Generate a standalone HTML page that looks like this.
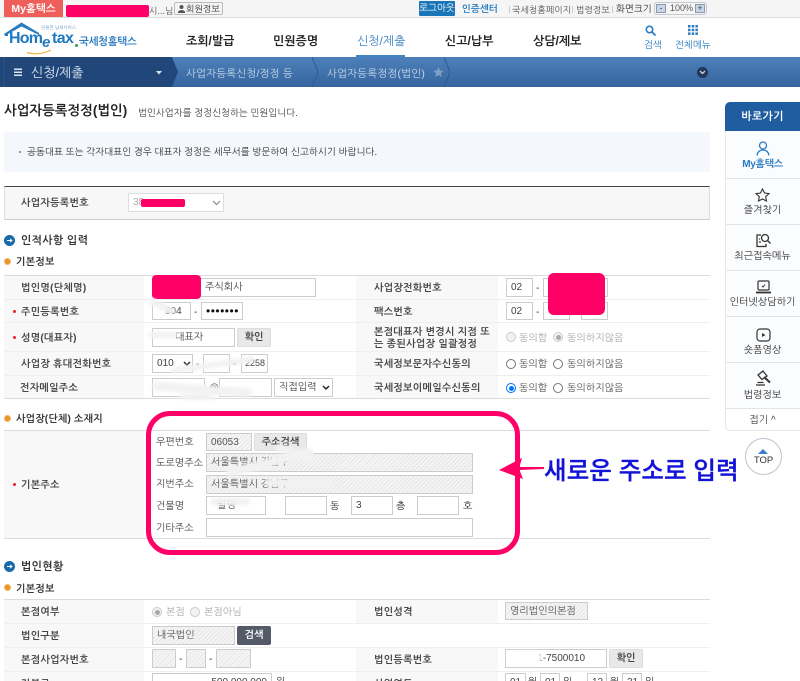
<!DOCTYPE html>
<html lang="ko"><head><meta charset="utf-8"><title>사업자등록정정(법인)</title>
<style>
html,body{margin:0;padding:0;background:#fff}
#p{position:relative;width:800px;height:681px;overflow:hidden;background:#fff;font-family:"Liberation Sans","NanumGothic","Noto Sans CJK KR",sans-serif;font-size:10px;color:#333}
#p div,#p span.a{position:absolute;box-sizing:border-box}
.t{position:absolute;white-space:nowrap;line-height:12px;font-size:10px;margin-top:2px}
.b{font-weight:bold}
.l{position:absolute;white-space:nowrap;line-height:12px;font-size:10px;font-weight:bold;color:#444;letter-spacing:.3px;margin-top:2px}
.i{background:#fff;border:1px solid #ccc;line-height:17px;padding-left:4px;font-size:10px;white-space:nowrap;overflow:hidden;color:#444}
.h{background:repeating-linear-gradient(135deg,#f5f5f5 0 2px,#e6e6e6 2px 3px);border:1px solid #ccc;line-height:17px;padding-left:4px;font-size:10px;white-space:nowrap;overflow:hidden;color:#555}
.btn{background:#e8e8e8;border:1px solid #ddd;border-radius:2px;text-align:center;line-height:17px;font-weight:bold;font-size:10px;color:#444}
.r{width:10px;height:10px;border-radius:50%;border:1px solid #767676;background:#fff}
.rd{border-color:#ccc;background:#f2f2f2}
.line{background:#e4e4e4;height:1px}
.sm{background:#f2f2f2;border-radius:8px;filter:blur(1.5px)}
.rc{width:7px;height:7px;border-radius:50%;background:#e8962a;border:1.5px solid #f4b45c}
.sl{position:absolute;left:725px;width:75px;text-align:center;font-size:10px;line-height:12px;color:#333;white-space:nowrap}
.nav{position:absolute;top:34px;font-size:12px;font-weight:bold;color:#222;line-height:14px;white-space:nowrap}
</style></head><body><div id="p">

<!-- top bar -->
<div style="left:0;top:0;width:800px;height:18px;background:#f5f5f5;border-bottom:1px solid #dedede"></div>
<div style="left:4px;top:0;width:59px;height:17px;background:#ee5f5b;color:#fff;font-weight:bold;font-size:10.5px;line-height:18px;text-align:center">My홈택스</div>
<div style="left:66px;top:5px;width:83px;height:12px;background:#ff0066;border-radius:2px"></div>
<span class="t" style="left:149px;top:3px;color:#555;font-size:9px">시...님</span>
<div style="left:174px;top:2px;width:49px;height:13px;background:#f4f4f4;border:1px solid #bbb;border-radius:2px;font-size:9px;line-height:12px;padding-left:11px;color:#333;white-space:nowrap">회원정보
<svg style="position:absolute;left:3px;top:2px" width="7" height="8" viewBox="0 0 7 8"><circle cx="3.5" cy="2" r="2" fill="#555"/><path d="M0 8V6.500Q3.500 3.500 7 6.500V8Z" fill="#555"/></svg></div>

<div style="left:419px;top:1px;width:36px;height:15px;background:#1a76b8;color:#fff;font-size:9.500px;line-height:16px;text-align:center;border-radius:1px">로그아웃</div>
<span class="t b" style="left:462px;top:2px;color:#2b7fc0;font-size:9.500px">인증센터</span>
<span class="t" style="left:512px;top:2px;font-size:9px;color:#555">국세청홈페이지</span>
<span class="t" style="left:576px;top:2px;font-size:9px;color:#555">법령정보</span>
<span class="t" style="left:616px;top:2px;font-size:9.500px;color:#333">화면크기</span>
<div style="left:509px;top:6px;width:1px;height:7px;background:#ccc"></div>
<div style="left:572px;top:6px;width:1px;height:7px;background:#ccc"></div>
<div style="left:612px;top:6px;width:1px;height:7px;background:#ccc"></div>
<div style="left:654px;top:2px;width:53px;height:13px;background:#f5f5f5;border:1px solid #c4c8d0;border-radius:3px"></div>
<div style="left:656px;top:4px;width:10px;height:9px;background:#c8d6e8;border:1px solid #8a9ab0;text-align:center;font-size:9px;line-height:6px;color:#345">-</div>
<span class="t" style="left:670px;top:0;font-size:9px;color:#555">100%</span>
<div style="left:695px;top:4px;width:10px;height:9px;background:#c8d6e8;border:1px solid #8a9ab0;text-align:center;font-size:9px;line-height:7px;color:#345">+</div>

<!-- logo -->
<svg style="position:absolute;left:3px;top:21px" width="80" height="34" viewBox="0 0 80 34">
<path d="M1 13L18.500 1.500 36 12V14L18.500 5.500 5 13V15H2Z" fill="#2a7cc0"/>
<path d="M24 31.500Q36 35 48 29" stroke="#f0b040" stroke-width="1.200" fill="none"/>
</svg>
<span class="t b" style="left:9px;top:28px;font-size:16px;line-height:18px;color:#1f79c0;letter-spacing:-.8px">Hom</span>
<span class="t b" style="left:42px;top:33px;font-size:15px;line-height:16px;color:#1f79c0;font-style:italic">e</span>
<span class="t b" style="left:52px;top:28px;font-size:16px;line-height:18px;color:#1f79c0;letter-spacing:-.6px">tax</span>
<div style="left:75px;top:44px;width:3px;height:3px;background:#30a050;border-radius:50%"></div>
<span class="t" style="left:41px;top:23px;font-size:4.500px;line-height:6px;color:#5a90c0">민원은 납세서비스</span>
<span class="t b" style="left:79px;top:34px;font-size:10.500px;color:#2a7cc0;letter-spacing:-.3px">국세청홈택스</span>

<!-- nav -->
<span class="nav" style="left:186px">조회/발급</span>
<span class="nav" style="left:273px">민원증명</span>
<span class="nav" style="left:357px;color:#3f86c4;font-weight:normal">신청/제출</span>
<span class="nav" style="left:445px">신고/납부</span>
<span class="nav" style="left:533px">상담/제보</span>
<svg style="position:absolute;left:645px;top:25px" width="11" height="11" viewBox="0 0 11 11"><circle cx="4.500" cy="4.500" r="3.200" fill="none" stroke="#2a7cc0" stroke-width="1.600"/><path d="M7 7L10.500 10.500" stroke="#2a7cc0" stroke-width="1.800"/></svg>
<span class="t" style="left:644px;top:38px;font-size:9.500px;color:#2a7cc0">검색</span>
<svg style="position:absolute;left:688px;top:25px" width="10" height="10" viewBox="0 0 10 10" fill="#2a7cc0"><rect width="2.500" height="2.500"/><rect x="3.700" width="2.500" height="2.500"/><rect x="7.400" width="2.500" height="2.500"/><rect y="3.700" width="2.500" height="2.500"/><rect x="3.700" y="3.700" width="2.500" height="2.500"/><rect x="7.400" y="3.700" width="2.500" height="2.500"/><rect y="7.400" width="2.500" height="2.500"/><rect x="3.700" y="7.400" width="2.500" height="2.500"/><rect x="7.400" y="7.400" width="2.500" height="2.500"/></svg>
<span class="t" style="left:675px;top:38px;font-size:9.500px;color:#2a7cc0">전체메뉴</span>

<!-- breadcrumb -->
<div style="left:0;top:57px;width:800px;height:30px;background:linear-gradient(#4d80ba,#36659f)"></div>
<div style="left:356px;top:55px;width:49px;height:2px;background:#3f86c4"></div>
<svg style="position:absolute;left:0;top:57px" width="450" height="30" viewBox="0 0 450 30"><path d="M0 0H172L178 15 172 30H0Z" fill="#21477a"/><path d="M312 0L318 15 312 30M444 0L450 15 444 30" fill="none" stroke="#2f5a92"/><path d="M4 0V30" stroke="#2c5488"/></svg>
<svg style="position:absolute;left:14px;top:68px" width="9" height="9" viewBox="0 0 9 9" fill="#dfe6f0"><rect width="8" height="1.500" y="0.500"/><rect width="8" height="1.500" y="3.500"/><rect width="8" height="1.500" y="6.500"/></svg>
<span class="t" style="left:31px;top:64px;font-size:13px;line-height:14px;color:#dfe8f3">신청/제출</span>
<svg style="position:absolute;left:156px;top:71px" width="6" height="4" viewBox="0 0 6 4"><path d="M0 0H6L3 3.500Z" fill="#dfe6f0"/></svg>
<span class="t" style="left:186px;top:66px;font-size:10.500px;color:#c8d6e8;letter-spacing:.2px">사업자등록신청/정정 등</span>
<span class="t" style="left:327px;top:66px;font-size:10.500px;color:#c8d6e8;letter-spacing:.2px">사업자등록정정(법인)</span>
<svg style="position:absolute;left:433px;top:67px" width="11" height="10" viewBox="0 0 11 10"><path d="M5.500 0L7 3.500 10.800 3.800 7.900 6.200 8.800 10 5.500 8 2.200 10 3.100 6.200 .2 3.800 4 3.500Z" fill="#7e9fc6"/></svg>
<div style="left:697px;top:67px;width:11px;height:11px;border-radius:50%;background:#22375a"></div>
<svg style="position:absolute;left:699px;top:70px" width="7" height="5" viewBox="0 0 7 5"><path d="M1 1L3.500 3.500 6 1" fill="none" stroke="#cdd6e2" stroke-width="1.300"/></svg>

<!-- title -->
<span class="t" style="left:4px;top:100px;font-size:13.500px;line-height:18px;font-weight:bold;color:#222">사업자등록정정(법인)</span>
<span class="t" style="left:138px;top:106px;font-size:9.500px;color:#444">법인사업자를 정정신청하는 민원입니다.</span>

<div style="left:4px;top:132px;width:706px;height:40px;background:#f4f7fb"></div>
<div style="left:19px;top:151px;width:2px;height:2px;background:#999"></div>
<span class="t" style="left:27px;top:145px;font-size:9.500px;color:#333;letter-spacing:.05px">공동대표 또는 각자대표인 경우 대표자 정정은 세무서를 방문하여 신고하시기 바랍니다.</span>

<div style="left:4px;top:186px;width:706px;height:34px;background:#f7f7f7;border-top:1px solid #444;border-bottom:1px solid #ccc;border-left:1px solid #ddd;border-right:1px solid #ddd"></div>
<span class="l" style="left:21px;top:196px">사업자등록번호</span>
<div class="i" style="left:128px;top:193px;width:96px;height:19px;color:#aaa;border-color:#ddd">38</div>
<div style="left:141px;top:199px;width:44px;height:8px;background:#ff0066;border-radius:2px"></div>
<svg style="position:absolute;left:212px;top:200px" width="9" height="6" viewBox="0 0 9 6"><path d="M1 1L4.500 4.500 8 1" fill="none" stroke="#888" stroke-width="1.200"/></svg>

<svg style="position:absolute;left:4px;top:235px" width="11" height="11" viewBox="0 0 11 11"><circle cx="5.500" cy="5.500" r="5.500" fill="#1a6aa8"/><path d="M3 5.500H8M6 3.800L8 5.500 6 7.200" fill="none" stroke="#fff" stroke-width=".9"/></svg>
<span class="t b" style="left:21px;top:233px;font-size:11px;color:#333;letter-spacing:.3px">인적사항 입력</span>
<div class="rc" style="left:4px;top:258px"></div>
<span class="t b" style="left:16px;top:255px;color:#333;letter-spacing:.3px">기본정보</span>

<!-- table 1 -->
<div style="left:4px;top:275px;width:140px;height:124px;background:#f8f8f8"></div>
<div style="left:356px;top:275px;width:142px;height:124px;background:#f8f8f8"></div>
<div style="left:4px;top:275px;width:706px;height:1px;background:#dcdcdc"></div>
<div class="line" style="left:4px;top:299px;width:706px;background:#efefef"></div>
<div class="line" style="left:4px;top:322px;width:706px;background:#efefef"></div>
<div class="line" style="left:4px;top:351px;width:706px;background:#efefef"></div>
<div class="line" style="left:4px;top:375px;width:706px;background:#efefef"></div>
<div class="line" style="left:4px;top:398px;width:706px;background:#dcdcdc"></div>

<span class="l" style="left:21px;top:281px">법인명(단체명)</span>
<span class="l" style="left:21px;top:305px">주민등록번호</span><div style="left:13px;top:310px;width:3px;height:3px;background:#e22;border-radius:50%"></div>
<span class="l" style="left:21px;top:331px">성명(대표자)</span><div style="left:13px;top:336px;width:3px;height:3px;background:#e22;border-radius:50%"></div>
<span class="l" style="left:21px;top:357px">사업장 휴대전화번호</span>
<span class="l" style="left:20px;top:381px">전자메일주소</span>

<div class="i" style="left:152px;top:278px;width:164px;height:19px;padding-left:52px">주식회사</div>
<div style="left:152px;top:275px;width:49px;height:24px;background:#ff0066;border-radius:4px"></div>
<div class="i" style="left:152px;top:302px;width:39px;height:18px;padding-left:12px">904</div>
<span class="t" style="left:194px;top:305px">-</span>
<div class="i" style="left:201px;top:302px;width:42px;height:18px;color:#111;font-size:12px;letter-spacing:.5px">•••••••</div>
<div class="i" style="left:152px;top:328px;width:83px;height:19px;padding-left:22px">대표자</div>
<div class="btn" style="left:237px;top:328px;width:34px;height:19px">확인</div>
<div class="i" style="left:152px;top:354px;width:41px;height:19px">010</div>
<svg style="position:absolute;left:183px;top:361px" width="8" height="6" viewBox="0 0 8 6"><path d="M1 1L4 4 7 1" fill="none" stroke="#222" stroke-width="1.500"/></svg>
<span class="t" style="left:196px;top:357px">-</span>
<div class="i" style="left:203px;top:354px;width:27px;height:19px"></div>
<span class="t" style="left:233px;top:357px">-</span>
<div class="i" style="left:241px;top:354px;width:27px;height:19px;font-size:9px;padding-left:3px">2258</div>
<div class="i" style="left:152px;top:378px;width:53px;height:19px"></div>
<span class="t" style="left:209px;top:381px">@</span>
<div class="i" style="left:219px;top:378px;width:53px;height:19px"></div>
<div class="i" style="left:274px;top:378px;width:59px;height:19px">직접입력</div>
<svg style="position:absolute;left:322px;top:385px" width="8" height="6" viewBox="0 0 8 6"><path d="M1 1L4 4 7 1" fill="none" stroke="#222" stroke-width="1.500"/></svg>
<!-- smudges -->
<div class="sm" style="left:148px;top:303px;width:28px;height:7px;transform:rotate(25deg)"></div>
<div class="sm" style="left:148px;top:332px;width:30px;height:6px"></div>
<div class="sm" style="left:170px;top:362px;width:85px;height:6px;transform:rotate(-8deg)"></div>
<div class="sm" style="left:152px;top:385px;width:100px;height:9px;transform:rotate(4deg)"></div>
<div class="sm" style="left:180px;top:393px;width:35px;height:7px"></div>

<span class="l" style="left:374px;top:281px">사업장전화번호</span>
<span class="l" style="left:374px;top:305px">팩스번호</span>
<span class="l" style="left:374px;top:325px">본점대표자 변경시 지점 또</span>
<span class="l" style="left:374px;top:337px">는 종된사업장 일괄정정</span>
<span class="l" style="left:374px;top:357px">국세정보문자수신동의</span>
<span class="l" style="left:374px;top:381px">국세정보이메일수신동의</span>

<div class="i" style="left:506px;top:278px;width:27px;height:19px">02</div><span class="t" style="left:536px;top:281px">-</span>
<div class="i" style="left:543px;top:278px;width:27px;height:19px"></div><div class="i" style="left:581px;top:278px;width:27px;height:19px"></div>
<div class="i" style="left:506px;top:302px;width:27px;height:18px">02</div><span class="t" style="left:536px;top:305px">-</span>
<div class="i" style="left:543px;top:302px;width:27px;height:18px"></div><div class="i" style="left:581px;top:302px;width:27px;height:18px"></div>
<div style="left:548px;top:273px;width:57px;height:42px;background:#ff0066;border-radius:6px"></div>

<div class="r rd" style="left:506px;top:332px"></div><span class="t" style="left:519px;top:331px;color:#aaa">동의함</span>
<div class="r rd" style="left:553px;top:332px"></div><div style="left:555.500px;top:334.500px;width:5px;height:5px;border-radius:50%;background:#aaa"></div><span class="t" style="left:567px;top:331px;color:#aaa">동의하지않음</span>
<div class="r" style="left:506px;top:359px"></div><span class="t" style="left:519px;top:357px;color:#555">동의함</span>
<div class="r" style="left:553px;top:359px"></div><span class="t" style="left:567px;top:357px;color:#555">동의하지않음</span>
<div class="r" style="left:506px;top:383px;border-color:#0075ff"></div><div style="left:508.500px;top:385.500px;width:5px;height:5px;border-radius:50%;background:#0075ff"></div><span class="t" style="left:519px;top:381px;color:#555">동의함</span>
<div class="r" style="left:553px;top:383px"></div><span class="t" style="left:567px;top:381px;color:#555">동의하지않음</span>

<!-- address -->
<div class="rc" style="left:4px;top:415px"></div>
<span class="t b" style="left:16px;top:412px;color:#333;letter-spacing:.2px">사업장(단체) 소재지</span>
<div style="left:4px;top:430px;width:140px;height:108px;background:#f8f8f8"></div>
<div style="left:4px;top:430px;width:706px;height:1px;background:#dcdcdc"></div>
<div style="left:4px;top:538px;width:706px;height:1px;background:#dcdcdc"></div>
<span class="l" style="left:21px;top:478px">기본주소</span><div style="left:13px;top:483px;width:3px;height:3px;background:#e22;border-radius:50%"></div>

<span class="t" style="left:156px;top:435px;color:#444">우편번호</span>
<span class="t" style="left:156px;top:456px;color:#444">도로명주소</span>
<span class="t" style="left:156px;top:477px;color:#444">지번주소</span>
<span class="t" style="left:156px;top:499px;color:#444">건물명</span>
<span class="t" style="left:156px;top:521px;color:#444">기타주소</span>
<div class="h" style="left:206px;top:433px;width:46px;height:18px">06053</div>
<div class="btn" style="left:254px;top:433px;width:53px;height:18px">주소검색</div>
<div class="h" style="left:206px;top:453px;width:267px;height:19px">서울특별시 강남구</div>
<div class="h" style="left:206px;top:475px;width:267px;height:19px">서울특별시 강남구</div>
<div class="i" style="left:206px;top:496px;width:60px;height:19px;padding-left:10px">빌딩</div>
<div class="i" style="left:285px;top:496px;width:42px;height:19px"></div><span class="t" style="left:330px;top:499px">동</span>
<div class="i" style="left:351px;top:496px;width:42px;height:19px">3</div><span class="t" style="left:396px;top:499px">층</span>
<div class="i" style="left:417px;top:496px;width:42px;height:19px"></div><span class="t" style="left:463px;top:499px">호</span>
<div class="i" style="left:206px;top:518px;width:267px;height:19px"></div>
<div class="sm" style="left:225px;top:458px;width:90px;height:9px;transform:rotate(-14deg)"></div>
<div class="sm" style="left:275px;top:449px;width:40px;height:8px;transform:rotate(20deg)"></div>
<div class="sm" style="left:265px;top:479px;width:70px;height:8px"></div>
<div class="sm" style="left:210px;top:498px;width:40px;height:7px"></div>

<!-- annotation -->
<div style="left:146px;top:411px;width:374px;height:144px;border:5px solid #ff0066;border-radius:24px"></div>
<svg style="position:absolute;left:495px;top:455px" width="52" height="30" viewBox="0 0 52 30"><path d="M4 15L27 3 24.500 12 49 12V14L24.500 15 28 24Z" fill="#ff0066"/></svg>
<span class="t" style="left:544px;top:455px;font-size:24.600px;line-height:30px;color:#1212d8;font-family:'Liberation Sans','Noto Sans CJK KR',sans-serif;font-weight:500;-webkit-text-stroke:.3px #1212d8">새로운 주소로 입력</span>

<!-- corporate -->
<svg style="position:absolute;left:4px;top:561px" width="11" height="11" viewBox="0 0 11 11"><circle cx="5.500" cy="5.500" r="5.500" fill="#1a6aa8"/><path d="M3 5.500H8M6 3.800L8 5.500 6 7.200" fill="none" stroke="#fff" stroke-width=".9"/></svg>
<span class="t b" style="left:21px;top:559px;font-size:11px;color:#333;letter-spacing:.3px">법인현황</span>
<div class="rc" style="left:4px;top:584px"></div>
<span class="t b" style="left:16px;top:582px;color:#333;letter-spacing:.3px">기본정보</span>
<div style="left:4px;top:599px;width:140px;height:82px;background:#f8f8f8"></div>
<div style="left:356px;top:599px;width:142px;height:24px;background:#f8f8f8"></div>
<div style="left:356px;top:647px;width:142px;height:34px;background:#f8f8f8"></div>
<div style="left:4px;top:599px;width:706px;height:1px;background:#dcdcdc"></div>
<div class="line" style="left:4px;top:623px;width:706px;background:#efefef"></div>
<div class="line" style="left:4px;top:647px;width:706px;background:#efefef"></div>
<div class="line" style="left:4px;top:671px;width:706px;background:#efefef"></div>
<span class="l" style="left:21px;top:605px">본점여부</span>
<span class="l" style="left:21px;top:629px">법인구분</span>
<span class="l" style="left:21px;top:653px">본점사업자번호</span>
<span class="l" style="left:21px;top:677px">자본금</span>
<span class="l" style="left:374px;top:605px">법인성격</span>
<span class="l" style="left:374px;top:653px">법인등록번호</span>
<span class="l" style="left:374px;top:677px">사업연도</span>

<div class="r rd" style="left:152px;top:607px"></div><div style="left:154.500px;top:609.500px;width:5px;height:5px;border-radius:50%;background:#aaa"></div>
<span class="t" style="left:166px;top:605px;color:#aaa">본점</span>
<div class="r rd" style="left:190px;top:607px"></div><span class="t" style="left:204px;top:605px;color:#aaa">본점아님</span>
<div class="h" style="left:505px;top:602px;width:83px;height:18px">영리법인의본점</div>
<div class="h" style="left:152px;top:626px;width:83px;height:19px">내국법인</div>
<div class="btn" style="left:237px;top:626px;width:34px;height:19px;background:#555a68;color:#fff;border-color:#555a68">검색</div>
<div class="h" style="left:152px;top:649px;width:24px;height:19px"></div><span class="t" style="left:179px;top:652px">-</span>
<div class="h" style="left:186px;top:649px;width:20px;height:19px"></div><span class="t" style="left:209px;top:652px">-</span>
<div class="h" style="left:216px;top:649px;width:35px;height:19px"></div>
<div class="i" style="left:505px;top:649px;width:102px;height:19px;padding-left:16px">0111-7500010</div>
<div class="sm" style="left:507px;top:651px;width:35px;height:14px;background:#fff"></div>
<div class="btn" style="left:609px;top:649px;width:34px;height:19px">확인</div>
<div class="i" style="left:152px;top:673px;width:120px;height:19px;text-align:right;padding-right:4px">500,000,000</div><span class="t" style="left:276px;top:675px">원</span>
<div class="i" style="left:505px;top:673px;width:21px;height:19px">01</div><span class="t" style="left:528px;top:675px">월</span>
<div class="i" style="left:540px;top:673px;width:20px;height:19px">01</div><span class="t" style="left:563px;top:675px">일</span><span class="t" style="left:578px;top:675px">~</span>
<div class="i" style="left:587px;top:673px;width:20px;height:19px">12</div><span class="t" style="left:610px;top:675px">월</span>
<div class="i" style="left:622px;top:673px;width:20px;height:19px">31</div><span class="t" style="left:645px;top:675px">일</span>

<!-- side panel -->
<div style="left:725px;top:102px;width:75px;height:329px;background:#fff;border:1px solid #e6e6e6;border-right:0;border-radius:5px 0 0 5px"></div>
<div style="left:725px;top:102px;width:75px;height:29px;background:#1f5ca0;border-radius:5px 0 0 0;color:#fff;font-size:11px;font-weight:bold;text-align:center;line-height:31px;letter-spacing:.3px">바로가기</div>
<div style="left:726px;top:131px;width:74px;height:277px;background:#fbfcfe"></div>
<div class="line" style="left:726px;top:178px;width:74px"></div>
<div class="line" style="left:726px;top:224px;width:74px"></div>
<div class="line" style="left:726px;top:270px;width:74px"></div>
<div class="line" style="left:726px;top:316px;width:74px"></div>
<div class="line" style="left:726px;top:362px;width:74px"></div>
<div class="line" style="left:726px;top:408px;width:74px"></div>

<svg style="position:absolute;left:756px;top:141px" width="14" height="15" viewBox="0 0 14 15" fill="none" stroke="#2a7cc0" stroke-width="1.300"><circle cx="7" cy="4.500" r="3.500"/><path d="M1 14.500Q2 9 7 9T13 14.500"/></svg>
<span class="sl" style="top:159px;color:#2a7cc0;font-weight:bold;font-size:10px;letter-spacing:-.3px">My홈택스</span>
<svg style="position:absolute;left:755px;top:188px" width="15" height="14" viewBox="0 0 15 14"><path d="M7.500 1L9.500 5 14 5.600 10.700 8.700 11.500 13 7.500 11 3.500 13 4.300 8.700 1 5.600 5.500 5Z" fill="none" stroke="#333" stroke-width="1.100"/></svg>
<span class="sl" style="top:205px">즐겨찾기</span>
<svg style="position:absolute;left:755px;top:233px" width="16" height="15" viewBox="0 0 16 15" fill="none" stroke="#333" stroke-width="1.300"><path d="M6 2H2V13.500H11V11"/><circle cx="10" cy="5" r="3.500"/><path d="M12.500 7.500L15.500 10.500M4 9H6M4 6H5"/></svg>
<span class="sl" style="top:251px">최근접속메뉴</span>
<svg style="position:absolute;left:756px;top:280px" width="15" height="14" viewBox="0 0 15 14" fill="none" stroke="#333" stroke-width="1.200"><rect x="2" y="1" width="11" height="9" rx="1"/><path d="M0 12.500H15" stroke-width="1.800"/><path d="M6 6L7 7 9 4.500" stroke-width="1"/></svg>
<span class="sl" style="top:297px">인터넷상담하기</span>
<svg style="position:absolute;left:756px;top:328px" width="15" height="14" viewBox="0 0 15 14"><rect x="1" y="1" width="13" height="12" rx="3" fill="none" stroke="#333" stroke-width="1.200"/><path d="M6 5L9.500 7 6 9Z" fill="#333"/></svg>
<span class="sl" style="top:345px">숏폼영상</span>
<svg style="position:absolute;left:754px;top:369px" width="18" height="18" viewBox="0 0 18 18" fill="none" stroke="#333" stroke-width="1.300"><path d="M4 6L9 2 13 7 8 10.500Z"/><path d="M10 8L16 13.500" stroke-width="2"/><path d="M2 16H11M3.500 13.500H9.500"/></svg>
<span class="sl" style="top:390px">법령정보</span>
<span class="sl" style="top:415px;color:#444">접기 ^</span>

<div style="left:745px;top:438px;width:37px;height:37px;border-radius:50%;background:#fff;border:1px solid #bcc4d0"></div>
<svg style="position:absolute;left:758px;top:449px" width="10" height="5" viewBox="0 0 10 5"><path d="M0 5L5 0 10 5Z" fill="#3a7cc8"/></svg>
<span class="t" style="left:745px;top:453px;width:37px;text-align:center;font-size:9.500px;color:#333">TOP</span>
</div></body></html>
